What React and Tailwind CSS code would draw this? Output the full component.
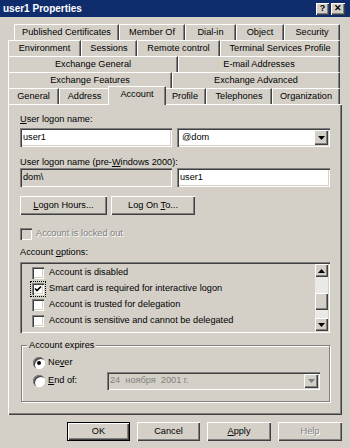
import React from 'react';

const RAISED = 'shadow-[inset_1px_1px_0_#ffffff,inset_-1px_-1px_0_#404040,inset_-2px_-2px_0_#808080]';
const SUNKEN = 'shadow-[inset_1px_1px_0_#808080,inset_2px_2px_0_#404040,inset_-1px_-1px_0_#ffffff,inset_-2px_-2px_0_#d4d0c8]';

const tabRows = [
  {
    cls: 'ml-[14px] w-[326px]',
    tabs: [
      ['Published Certificates', 'w-[105px]'],
      ['Member Of', 'w-[66px]'],
      ['Dial-in', 'w-[51px]'],
      ['Object', 'w-[48px]'],
      ['Security', 'w-[56px]'],
    ],
  },
  {
    cls: 'ml-[8px] w-[332px]',
    tabs: [
      ['Environment', 'w-[73px]'],
      ['Sessions', 'w-[56px]'],
      ['Remote control', 'w-[83px]'],
      ['Terminal Services Profile', 'w-[120px]'],
    ],
  },
  {
    cls: 'ml-[8px] w-[332px]',
    tabs: [
      ['Exchange General', 'w-[170px]'],
      ['E-mail Addresses', 'w-[162px]'],
    ],
  },
  {
    cls: 'ml-[8px] w-[332px]',
    tabs: [
      ['Exchange Features', 'w-[164px]'],
      ['Exchange Advanced', 'w-[168px]'],
    ],
  },
  {
    cls: 'ml-[8px] w-[332px]',
    tabs: [
      ['General', 'w-[51px]'],
      ['Address', 'w-[51px]'],
      ['Account', 'w-[58px]', true],
      ['Profile', 'w-[42px]'],
      ['Telephones', 'w-[66px]'],
      ['Organization', 'w-[68px]'],
    ],
  },
];

const options = [
  { label: 'Account is disabled' },
  { label: 'Smart card is required for interactive logon', checked: true, focus: true },
  { label: 'Account is trusted for delegation' },
  { label: 'Account is sensitive and cannot be delegated' },
];

const Tab = ({ label, w, active }) => (
  <div
    className={`${w} flex items-center justify-center border-t border-l border-r border-t-white border-l-white border-r-[#404040] shadow-[inset_-1px_0_0_#808080] bg-[#d4d0c8] ${
      active ? 'relative z-10 -mx-[2px] -mt-[2px] h-[19px] pb-[2px]' : 'h-[16px]'
    }`}
  >
    {label}
  </div>
);

const Arrow = ({ up, color = '#000000' }) => (
  <svg width="7" height="4" viewBox="0 0 7 4">
    <polygon points={up ? '0,4 7,4 3.5,0' : '0,0 7,0 3.5,4'} fill={color} />
  </svg>
);

const CheckBox = ({ checked, disabled, focus }) => (
  <span
    className={`flex h-[12px] w-[12px] shrink-0 items-center justify-center ${SUNKEN} ${
      disabled ? 'bg-[#d4d0c8]' : 'bg-white'
    } ${focus ? 'outline-1 outline-dotted outline-black outline-offset-[1px]' : ''}`}
  >
    {checked && (
      <svg width="8" height="8" viewBox="0 0 8 8">
        <path d="M1 3.5 L3 5.5 L7 1.5" stroke="#000" strokeWidth="1.6" fill="none" />
      </svg>
    )}
  </span>
);

const Radio = ({ checked }) => (
  <span className="flex h-[12px] w-[12px] shrink-0 items-center justify-center rounded-full bg-white shadow-[inset_1px_1px_0_#808080,inset_2px_2px_0_#404040,inset_-1px_-1px_0_#ffffff]">
    {checked && <span className="h-[4px] w-[4px] rounded-full bg-black" />}
  </span>
);

const Button = ({ children, cls = '', disabled, isDefault }) => (
  <div
    className={`flex items-center justify-center ${cls} ${
      isDefault ? 'border border-black' : ''
    } ${RAISED} ${disabled ? 'text-[#808080] [text-shadow:1px_1px_0_#ffffff]' : ''}`}
  >
    {children}
  </div>
);

export default function App() {
  return (
    <div className="flex h-[448px] w-[350px] flex-col overflow-hidden bg-[#d4d0c8] font-['Liberation_Sans',Arial,sans-serif] text-[9.2px] leading-none text-black">
      {/* title bar */}
      <div className="flex h-[17px] shrink-0 items-center justify-between bg-[#0f2d6d] pl-[3px] pr-[5px]">
        <span className="text-[10px] font-bold text-white">user1 Properties</span>
        <div className="flex gap-[2px]">
          <div className={`flex h-[12px] w-[13px] items-center justify-center bg-[#d4d0c8] text-[9px] font-bold ${RAISED}`}>?</div>
          <div className={`flex h-[12px] w-[14px] items-center justify-center bg-[#d4d0c8] text-[9px] font-bold ${RAISED}`}>✕</div>
        </div>
      </div>

      {/* tabs */}
      <div className="mt-[7px] flex flex-col">
        {tabRows.map((row, i) => (
          <div key={i} className={`flex h-[16px] ${row.cls}`}>
            {row.tabs.map(([label, w, active]) => (
              <Tab key={label} label={label} w={w} active={active} />
            ))}
          </div>
        ))}
      </div>

      {/* panel */}
      <div className={`ml-[8px] flex h-[311px] w-[334px] shrink-0 flex-col pl-[12px] pt-[9px] ${RAISED}`}>
        <div className="h-[12px] leading-[12px]">
          <span className="underline">U</span>ser logon name:
        </div>
        <div className="mt-[3px] flex gap-[5px]">
          <div className={`flex h-[19px] w-[152px] items-center bg-white pl-[3px] ${SUNKEN}`}>user1</div>
          <div className={`flex h-[19px] w-[153px] items-center justify-between bg-white pl-[5px] pr-[2px] ${SUNKEN}`}>
            <span>@dom</span>
            <div className={`flex h-[15px] w-[14px] items-center justify-center bg-[#d4d0c8] ${RAISED}`}>
              <Arrow />
            </div>
          </div>
        </div>

        <div className="mt-[9px] h-[12px] leading-[12px]">
          User logon name (pre-<span className="underline">W</span>indows 2000):
        </div>
        <div className="flex gap-[5px]">
          <div className={`flex h-[19px] w-[152px] items-center bg-[#d4d0c8] pl-[3px] ${SUNKEN}`}>dom\</div>
          <div className={`flex h-[19px] w-[153px] items-center bg-white pl-[3px] ${SUNKEN}`}>user1</div>
        </div>

        <div className="mt-[9px] flex gap-[4px]">
          <Button cls="h-[19px] w-[87px]">
            <span><span className="underline">L</span>ogon Hours...</span>
          </Button>
          <Button cls="h-[19px] w-[84px]">
            <span>Log On <span className="underline">T</span>o...</span>
          </Button>
        </div>

        <div className="mt-[12px] flex h-[13px] items-center gap-[4px]">
          <CheckBox disabled />
          <span className="text-[#808080] [text-shadow:1px_1px_0_#ffffff]">Account is locked out</span>
        </div>

        <div className="mt-[6px] h-[12px] leading-[12px]">
          Account <span className="underline">o</span>ptions:
        </div>

        <div className={`mt-[4px] flex h-[71px] w-[310px] p-[2px] ${SUNKEN}`}>
          <div className="flex flex-1 flex-col pl-[10px] pt-[1px]">
            {options.map((o) => (
              <div key={o.label} className="flex h-[16px] items-center gap-[5px]">
                <CheckBox checked={o.checked} focus={o.focus} />
                <span>{o.label}</span>
              </div>
            ))}
          </div>
          <div className="flex w-[13px] flex-col">
            <div className={`flex h-[13px] items-center justify-center bg-[#d4d0c8] ${RAISED}`}>
              <Arrow up />
            </div>
            <div className="flex flex-1 flex-col bg-[#ebe9e5]">
              <div className="h-[16px]" />
              <div className={`h-[17px] bg-[#d4d0c8] ${RAISED}`} />
            </div>
            <div className={`flex h-[13px] items-center justify-center bg-[#d4d0c8] ${RAISED}`}>
              <Arrow />
            </div>
          </div>
        </div>

        <fieldset className="ml-[1px] mt-[6px] flex h-[63px] w-[309px] flex-col border border-[#808080] pb-[11px] shadow-[inset_1px_1px_0_#ffffff,1px_1px_0_#ffffff]">
          <legend className="ml-[5px] h-[12px] bg-[#d4d0c8] px-[2px] leading-[12px]">Account expires</legend>
          <div className="ml-[11px] mt-[5px] flex h-[14px] items-center gap-[3px]">
            <Radio checked />
            <span>
              Ne<span className="underline">v</span>er
            </span>
          </div>
          <div className="ml-[11px] mt-[2px] flex h-[18px] items-center">
            <div className="flex w-[74px] items-center gap-[3px]">
              <Radio />
              <span>
                <span className="underline">E</span>nd of:
              </span>
            </div>
            <div className={`flex h-[18px] w-[213px] items-center justify-between bg-[#d4d0c8] pl-[3px] pr-[2px] text-[#808080] ${SUNKEN}`}>
              <span>24&nbsp;&nbsp;ноября&nbsp;&nbsp;2001 г.</span>
              <div className={`flex h-[14px] w-[14px] items-center justify-center bg-[#d4d0c8] ${RAISED}`}>
                <Arrow color="#808080" />
              </div>
            </div>
          </div>
        </fieldset>
      </div>

      {/* dialog buttons */}
      <div className="ml-[67px] mt-[7px] flex gap-[7px]">
        <Button cls="h-[19px] w-[63px]" isDefault>OK</Button>
        <Button cls="h-[19px] w-[63px]">Cancel</Button>
        <Button cls="h-[19px] w-[64px]">
          <span><span className="underline">A</span>pply</span>
        </Button>
        <Button cls="h-[19px] w-[64px]" disabled>Help</Button>
      </div>
    </div>
  );
}
